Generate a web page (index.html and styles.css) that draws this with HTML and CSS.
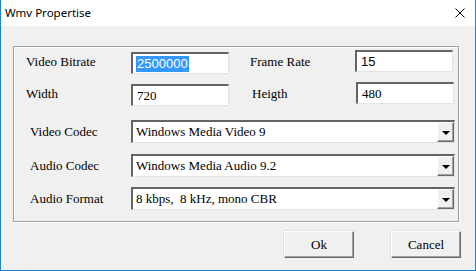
FILE: index.html
```html
<!DOCTYPE html>
<html lang="en">
<head>
  <meta charset="UTF-8" />
  <title>Wmv Propertise</title>
  <link rel="stylesheet" href="styles.css">
</head>
<body>

  <div class="window">

    <!-- Titelleiste -->
    <div class="titlebar">
      <span class="title">Wmv Propertise</span>
      <svg class="close" width="10" height="10" viewBox="0 0 10 10">
        <path d="M0.5 0.5 L9.5 9.5 M9.5 0.5 L0.5 9.5" stroke="#000" stroke-width="1" fill="none" />
      </svg>
    </div>

    <div class="content">

      <div class="group">

        <div class="row row-first">
          <div class="pair">
            <span class="label">Video Bitrate</span>
            <div class="edit low sans"><span class="selected">2500000</span></div>
          </div>
          <div class="pair pair-right">
            <span class="label">Frame Rate</span>
            <div class="edit sans">15</div>
          </div>
        </div>

        <div class="row row-second">
          <div class="pair">
            <span class="label">Width</span>
            <div class="edit low">720</div>
          </div>
          <div class="pair pair-right">
            <span class="label label-h">Heigth</span>
            <div class="edit">480</div>
          </div>
        </div>

        <div class="combo-row combo-video">
          <span class="label wide">Video Codec</span>
          <div class="combo">
            <span class="combo-text">Windows Media Video 9</span>
            <span class="drop"><span class="arrow"></span></span>
          </div>
        </div>

        <div class="combo-row combo-audio">
          <span class="label wide">Audio Codec</span>
          <div class="combo">
            <span class="combo-text">Windows Media Audio 9.2</span>
            <span class="drop"><span class="arrow"></span></span>
          </div>
        </div>

        <div class="combo-row combo-format">
          <span class="label wide">Audio Format</span>
          <div class="combo">
            <span class="combo-text">8 kbps,&nbsp; 8 kHz, mono CBR</span>
            <span class="drop"><span class="arrow"></span></span>
          </div>
        </div>
      </div>

      <div class="buttons">
        <button class="btn">Ok</button>
        <button class="btn btn-cancel">Cancel</button>
      </div>

    </div>
  </div>

</body>
</html>
```

FILE: styles.css
```css
body {
  margin: 0;
  font-family: "Liberation Serif", serif;
  font-size: 13px;
  color: #000;
}
.window {
  width: 476px;
  height: 271px;
  box-sizing: border-box;
  border: 1px solid #1883d7;
  border-top: none;
  background: #f0f0f0;
}
.titlebar {
  height: 26px;
  background: #fff;
  display: flex;
  align-items: center;
  justify-content: space-between;
  padding: 0 10px 0 4px;
}
.title {
  font-family: "Noto Sans", sans-serif;
  font-size: 11.5px;
  margin-top: -1px;
}
.content {
  padding: 20px 0 0 12px;
}
.group {
  width: 444px;
  height: 174px;
  border: 1px solid #a0a0a0;
  box-shadow: 1px 1px 0 #fff, inset 1px 1px 0 #fff;
}
.row {
  display: flex;
  height: 24px;
}
.row-first {
  margin-top: 3px;
}
.row-second {
  margin-top: 8px;
}
.pair {
  display: flex;
  align-items: center;
}
.pair .label {
  width: 105px;
  padding-left: 12px;
}
.pair-right {
  margin-left: 21px;
}
.pair-right .label {
  width: 105px;
  padding-left: 0;
}
.label-h {
  padding-left: 2px !important;
  width: 104px !important;
}
.edit {
  width: 98px;
  height: 22px;
  box-sizing: border-box;
  background: #fff;
  border-style: solid;
  border-width: 2px 1px 1px 2px;
  border-color: #646464 #e3e3e3 #e3e3e3 #646464;
  padding-left: 4px;
  line-height: 19px;
  align-self: flex-start;
}
.edit.low {
  margin-top: 2px;
}
.sans {
  font-family: "Liberation Sans", sans-serif;
}
.selected {
  background: #3399ff;
  color: #fff;
  display: inline-block;
  line-height: 16px;
  padding: 0 1px;
  margin-left: -1px;
}
.combo-row {
  display: flex;
  align-items: center;
  height: 23px;
}
.combo-video {
  margin-top: 14px;
}
.combo-audio {
  margin-top: 11px;
}
.combo-format {
  margin-top: 10px;
}
.label.wide {
  width: 101px;
  padding-left: 16px;
}
.combo {
  width: 324px;
  height: 23px;
  box-sizing: border-box;
  background: #fff;
  border-style: solid;
  border-width: 2px 1px 1px 2px;
  border-color: #646464 #e3e3e3 #e3e3e3 #646464;
  display: flex;
  align-items: center;
  justify-content: space-between;
}
.combo-text {
  padding-left: 3px;
  white-space: nowrap;
}
.drop {
  width: 17px;
  height: 20px;
  box-sizing: border-box;
  background: #f0f0f0;
  border-style: solid;
  border-width: 1px;
  border-color: #fff #696969 #696969 #fff;
  box-shadow: inset -1px -1px 0 #a0a0a0;
  display: flex;
  align-items: center;
  justify-content: center;
  align-self: flex-start;
}
.arrow {
  width: 0;
  height: 0;
  border-left: 4px solid transparent;
  border-right: 4px solid transparent;
  border-top: 4px solid #000;
  margin-top: 1px;
}
.buttons {
  display: flex;
  margin-top: 9px;
  padding-left: 271px;
  gap: 37px;
}
.btn {
  width: 70px;
  height: 27px;
  font-family: "Liberation Serif", serif;
  font-size: 13px;
  color: #000;
  background: #f0f0f0;
  border-style: solid;
  border-width: 1px;
  border-color: #fff #696969 #696969 #fff;
  box-shadow: inset -1px -1px 0 #a0a0a0, -1px -1px 0 #e3e3e3;
  padding: 0;
}
```
